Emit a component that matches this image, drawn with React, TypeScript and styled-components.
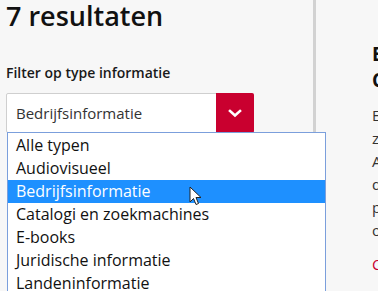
import styled, { createGlobalStyle } from "styled-components";

const options = [
  "Alle typen",
  "Audiovisueel",
  "Bedrijfsinformatie",
  "Catalogi en zoekmachines",
  "E-books",
  "Juridische informatie",
  "Landeninformatie",
];

const selected = "Bedrijfsinformatie";

const GlobalStyle = createGlobalStyle`
  html, body {
    margin: 0;
    padding: 0;
    background: #f7f7f7;
    font-family: "Open Sans", "Noto Sans", sans-serif;
    color: #111;
    overflow: hidden;
  }
`;

const App = () => {
  return (
    <>
      <GlobalStyle />
      <Page>
        <Results>
          <Title>7 resultaten</Title>
          <Label>Filter op type informatie</Label>
          <SelectWrap>
            <SelectBox>
              <SelectValue>{selected}</SelectValue>
              <SelectButton>
                <svg width="14" height="9" viewBox="0 0 14 9">
                  <path
                    d="M2 2 L7 6.5 L12 2"
                    fill="none"
                    stroke="#fff"
                    strokeWidth="2.6"
                    strokeLinecap="square"
                  />
                </svg>
              </SelectButton>
            </SelectBox>
            <Menu>
              {options.map((o) => (
                <Option key={o} active={o === selected}>
                  {o}
                  {o === selected && (
                    <Cursor width="14" height="21" viewBox="0 0 14 21">
                      <path
                        d="M1 1 L1 16 L4.5 12.5 L7 18.5 L9.5 17.5 L7 11.5 L12 11.5 Z"
                        fill="#fff"
                        stroke="#222"
                        strokeWidth="1"
                        strokeLinejoin="round"
                      />
                    </Cursor>
                  )}
                </Option>
              ))}
            </Menu>
          </SelectWrap>
        </Results>
        <Divider />
        <Detail>
          <DetailTitle>
            Euromonitor Passport
            <br />
            Company profiles
          </DetailTitle>
          <Text>
            Economische gegevens en
            <br />
            zakelijke informatie over landen.
            <br />
            Analyses van markten, bedrijven
            <br />
            de consument en trends in
            <br />
            producten en diensten over
            <br />
            ondernemingen wereldwijd.
          </Text>
          <More>Chat met een specialist</More>
        </Detail>
      </Page>
    </>
  );
};

const Page = styled.div`
  display: flex;
  width: 378px;
  height: 291px;
  overflow: hidden;
`;

const Results = styled.div`
  width: 307px;
  flex-shrink: 0;
  padding-left: 6px;
`;

const Title = styled.h1`
  margin: 0;
  font-size: 27px;
  line-height: 32px;
  font-weight: 600;
  color: #111;
`;

const Label = styled.div`
  margin-top: 32px;
  font-size: 14px;
  line-height: 18px;
  font-weight: 600;
  color: #1a1a1a;
`;

const SelectWrap = styled.div`
  position: relative;
  margin-top: 11px;
  width: 248px;
`;

const SelectBox = styled.div`
  display: flex;
  height: 40px;
  background: #fff;
  border: 1px solid #cfcfcf;
  border-radius: 2px;
  box-sizing: border-box;
`;

const SelectValue = styled.div`
  flex: 1;
  display: flex;
  align-items: center;
  padding-left: 9px;
  font-size: 15px;
  color: #333;
`;

const SelectButton = styled.div`
  width: 38px;
  display: flex;
  align-items: center;
  justify-content: center;
  background: #c9002f;
  margin: -1px -1px -1px 0;
  border-radius: 0 2px 2px 0;
`;

const Menu = styled.div`
  position: absolute;
  top: 39px;
  left: 1px;
  width: 319px;
  background: #fff;
  border: 1px solid #7b9fdc;
  box-sizing: border-box;
  padding-top: 1px;
  z-index: 5;
`;

const Option = styled.div<{ active?: boolean }>`
  position: relative;
  height: 23px;
  line-height: 23px;
  padding-left: 8px;
  font-size: 16px;
  white-space: nowrap;
  color: ${(p) => (p.active ? "#fff" : "#111")};
  background: ${(p) => (p.active ? "#1e90ff" : "transparent")};
`;

const Cursor = styled.svg`
  position: absolute;
  left: 181px;
  top: 6px;
`;

const Divider = styled.div`
  width: 3px;
  height: 132px;
  background: #d2d2d2;
  flex-shrink: 0;
`;

const Detail = styled.div`
  padding-left: 56px;
  padding-top: 41px;
  white-space: nowrap;
`;

const DetailTitle = styled.h2`
  margin: 0;
  font-size: 19px;
  line-height: 26px;
  font-weight: 700;
  color: #111;
`;

const Text = styled.p`
  margin: 11px 0 0;
  font-size: 15px;
  line-height: 23px;
  color: #333;
`;

const More = styled.div`
  margin-top: 12px;
  font-size: 15px;
  color: #c9002f;
`;

export default App;
